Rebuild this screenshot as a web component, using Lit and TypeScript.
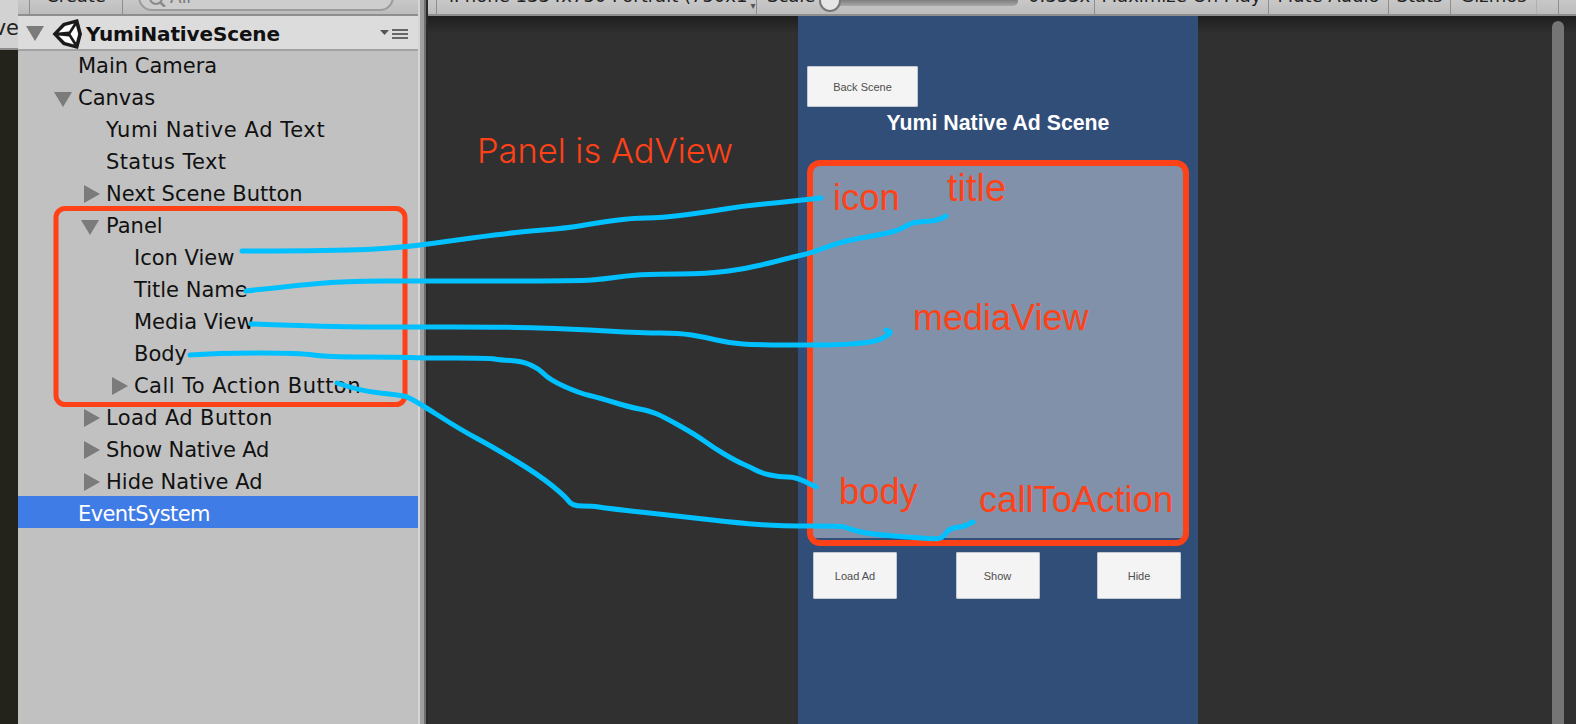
import { LitElement, html, css, svg } from "lit";
import { customElement } from "lit/decorators.js";

interface Row { name: string; depth: number; arrow?: "open" | "closed"; selected?: boolean; ls?: number; }

const ROWS: Row[] = [
  { name: "Main Camera", depth: 0 },
  { name: "Canvas", depth: 0, arrow: "open" },
  { name: "Yumi Native Ad Text", depth: 1, ls: 0.6 },
  { name: "Status Text", depth: 1, ls: 0.4 },
  { name: "Next Scene Button", depth: 1, arrow: "closed" },
  { name: "Panel", depth: 1, arrow: "open" },
  { name: "Icon View", depth: 2 },
  { name: "Title Name", depth: 2 },
  { name: "Media View", depth: 2 },
  { name: "Body", depth: 2 },
  { name: "Call To Action Button", depth: 2, arrow: "closed", ls: 0.45 },
  { name: "Load Ad Button", depth: 1, arrow: "closed", ls: 0.38 },
  { name: "Show Native Ad", depth: 1, arrow: "closed", ls: -0.15 },
  { name: "Hide Native Ad", depth: 1, arrow: "closed" },
  { name: "EventSystem", depth: 0, selected: true, ls: -0.6 },
];

const PAD = [33, 61, 89];

const LINES: number[][] = [
  [242,251, 333,251, 400,248, 471,238, 518,232, 568,228, 596,223, 632,218, 661,218, 707,212, 743,206, 775,203, 793,201, 821,198],
  [246,291, 317,283, 367,281, 400,281, 579,281, 604,279, 625,276, 650,274, 707,274, 750,268, 793,257, 811,253, 843,241, 879,235, 900,230, 912,222, 936,221, 946,216],
  [251,324, 333,327, 400,327, 507,327, 571,329, 643,333, 679,333, 704,337, 729,343, 757,345, 868,345, 893,333, 886,330],
  [190,355, 217,353, 300,353, 327,357, 400,357, 421,358, 489,358, 500,360, 521,361, 538,368, 550,380, 579,393, 600,398, 629,407, 650,411, 664,417, 696,435, 714,448, 736,461, 750,467, 761,473, 779,477, 796,477, 816,487],
  [337,383, 360,391, 400,395, 411,398, 461,430, 493,447, 539,475, 566,497, 572,506, 593,506, 604,508, 686,517, 739,523, 779,526, 843,526, 846,528, 868,534, 920,538, 938,539, 943,537, 950,528, 963,527, 973,522],
];

/** Smooths a hand-drawn polyline by running quadratic curves through the segment midpoints. */
function smooth(p: number[]): string {
  let d = `M${p[0]} ${p[1]}`;
  for (let i = 2; i < p.length - 2; i += 2) {
    const mx = (p[i] + p[i + 2]) / 2;
    const my = (p[i + 1] + p[i + 3]) / 2;
    d += ` Q${p[i]} ${p[i + 1]} ${mx} ${my}`;
  }
  return d + ` L${p[p.length - 2]} ${p[p.length - 1]}`;
}

@customElement("app-root")
export class AppRoot extends LitElement {
  static styles = css`
    :host { display: block; width: 1576px; height: 724px; overflow: hidden; position: relative; font-family: "DejaVu Sans", sans-serif; }
    .page { display: flex; width: 1576px; height: 724px; }

    .edge { width: 18px; flex: none; background: #23231c; display: flex; flex-direction: column; }
    .edge-top { height: 50px; background: #d2d2d2; border-bottom: 2px solid #8c8c8c; box-sizing: border-box; overflow: hidden; display: flex; align-items: center; justify-content: flex-end; font-size: 21px; color: #222; white-space: nowrap; }
    .edge-top span { margin-top: 8px; margin-right: -1px; }

    .hierarchy { width: 400px; flex: none; background: #c1c1c1; display: flex; flex-direction: column; }
    .tb { height: 16px; flex: none; box-sizing: border-box; background: linear-gradient(#c8c8c8, #bcbcbc); border-bottom: 2px solid #8e8e8e; display: flex; overflow: hidden; position: relative; }
    .tb-text { font-size: 18px; line-height: 22px; margin-top: -15px; white-space: nowrap; color: #222; height: 22px; }
    .create { width: 92px; margin-left: 11px; flex: none; border-left: 1.5px solid #8e8e8e; border-right: 1.5px solid #8e8e8e; display: flex; justify-content: center; }
    .search { width: 256px; height: 28px; margin-left: 15px; margin-top: -17px; flex: none; box-sizing: border-box; background: #cdcdcd; border: 2px solid #9c9c9c; border-radius: 14px; display: flex; align-items: flex-end; padding: 0 0 2px 8px; gap: 4px; }
    .search .all { font-size: 17px; line-height: 18px; color: #777; margin-bottom: 1px; }
    .header { height: 35px; flex: none; box-sizing: border-box; background: #dcdcdc; border-bottom: 2px solid #a2a2a2; display: flex; align-items: center; position: relative; z-index: 1; padding: 2px 0 0 8px; }
    .header .tri { margin-right: 8px; }
    .scene { font-weight: 700; font-size: 20px; letter-spacing: -0.13px; margin-left: 4px; color: #111; }
    .menu { margin-left: auto; margin-right: 10px; }
    .list { margin-top: -3px; display: flex; flex-direction: column; }
    .row { height: 32px; flex: none; display: flex; align-items: center; font-size: 21px; color: #111; white-space: nowrap; box-sizing: border-box; padding-top: 4px; }
    .row.selected { background: #3f7ce6; color: #fff; }
    .arrow { width: 27px; flex: none; display: flex; align-items: center; }
    .arrow .open { margin: 2px 0 0 2px; }
    .arrow .closed { margin-left: 5px; }
    .row.lv0 .arrow .open { margin-left: 3px; }

    .divider { width: 10px; flex: none; background: linear-gradient(90deg, #d6d6d6 0 2px, #a0a0a0 2px 6px, #6e6e6e 6px 8px, #2a2a2a 8px 10px); }

    .game { flex: 1; min-width: 0; display: flex; flex-direction: column; background: #303030; }
    .gitem { flex: none; box-sizing: border-box; display: flex; justify-content: center; border-right: 1.5px solid #8e8e8e; }
    .g1 { width: 9px; }
    .g2 { width: 320px; justify-content: flex-start; padding-left: 12px; overflow: hidden; }
    .g3 { width: 338px; justify-content: flex-start; padding-left: 10px; position: relative; }
    .g4 { width: 174px; }
    .g5 { width: 120px; }
    .g6 { width: 62px; }
    .g7 { width: 86px; border-right-color: #b0b0b0; }
    .g8 { width: 22px; }
    .track { position: absolute; left: 72px; top: 0; width: 189px; height: 6px; border-radius: 0 0 5px 5px; background: linear-gradient(#7e7e7e, #a8a8a8); }
    .thumb { position: absolute; left: 62px; top: -10px; width: 18px; height: 18px; border-radius: 50%; background: #e6e6e6; border: 2px solid #777; }
    .zoom { position: absolute; left: 271px; top: 0; }
    .drop { font-size: 10px; color: #555; margin-left: 3px; line-height: 12px; }

    .view { flex: 1; min-height: 0; display: flex; padding-left: 370px; background: linear-gradient(#1e1e1e, #303030 18px); position: relative; }
    .phone { width: 400px; flex: none; background: #314e79; display: flex; flex-direction: column; padding-top: 50px; box-sizing: border-box; }
    .btn { background: #f4f4f4; border-radius: 2px; box-shadow: 0 0 0 1px rgba(190,195,205,.9) inset; display: flex; align-items: center; justify-content: center; font-family: "Liberation Sans", sans-serif; font-size: 11px; color: #4e4e4e; }
    .back { width: 111px; height: 41px; margin-left: 9px; flex: none; }
    .title { height: 32px; flex: none; display: flex; align-items: center; justify-content: center; font-family: "Liberation Sans", sans-serif; font-weight: 700; font-size: 21.3px; color: #fff; }
    .panel { height: 374px; margin: 25px 12px 0 12px; flex: none; background: #8191aa; }
    .actions { display: flex; justify-content: space-between; margin: 14px 17px 0 15px; }
    .actions .btn { width: 84px; height: 47px; }
    .actions .btn:nth-child(2) { margin-left: 1px; }
    .scroll { position: absolute; left: 1124px; top: 5px; bottom: 0; width: 12px; border-radius: 6px 6px 0 0; background: #757575; }

    .overlay { position: absolute; left: 0; top: 0; width: 1576px; height: 724px; pointer-events: none; }
    .label { position: absolute; color: #ff4118; font-family: "Liberation Sans", sans-serif; font-size: 36.4px; line-height: 40px; white-space: nowrap; }
    .l-adview { left: 477px; top: 131px; font-family: Inter, sans-serif; font-size: 34.4px; font-weight: 300; }
    .l-icon { left: 833px; top: 178px; }
    .l-title { left: 947px; top: 168px; font-size: 38px; }
    .l-media { left: 913px; top: 298px; font-size: 36px; }
    .l-body { left: 839px; top: 472px; }
    .l-cta { left: 979px; top: 480px; }
  `;

  private tri(kind: "open" | "closed") {
    return kind === "open"
      ? html`<svg class="open tri" width="18" height="15" viewBox="0 0 18 15"><polygon points="0,0 18,0 9,15" fill="#7b7b7b"/></svg>`
      : html`<svg class="closed tri" width="16" height="18" viewBox="0 0 16 18"><polygon points="0,0 16,9 0,18" fill="#7b7b7b"/></svg>`;
  }

  private logo() {
    return html`<svg width="30" height="30" viewBox="0 0 30 30">
      <polygon points="0.5,15 11,4 26,0 30,15 26,30 11,26" fill="#1a1a1a"/>
      <polygon points="6.5,13.5 13,7 22,4.5 17,12.5" fill="#fff"/>
      <polygon points="6.5,16.5 17,17.5 22,25.5 13,23" fill="#fff"/>
      <polygon points="18.5,15 24,6.5 26.2,15 24,23.5" fill="#fff"/>
    </svg>`;
  }

  private overlay() {
    return svg`<svg class="overlay" width="1576" height="724" viewBox="0 0 1576 724" fill="none">
      <rect x="56" y="208.5" width="349" height="196" rx="9" stroke="#ff4118" stroke-width="5"/>
      <rect x="810" y="163" width="376" height="380" rx="10" stroke="#ff4118" stroke-width="6"/>
      ${LINES.map((p) => svg`<path d=${smooth(p)} stroke="#00c0ff" stroke-width="5" stroke-linecap="round" stroke-linejoin="round"/>`)}
    </svg>`;
  }

  render() {
    return html`
      <div class="page">
        <div class="edge"><div class="edge-top"><span>ve</span></div></div>
        <div class="hierarchy">
          <div class="tb">
            <div class="create"><span class="tb-text">Create</span></div>
            <div class="search">
              <svg width="18" height="8" viewBox="0 0 18 8" fill="none"><circle cx="8" cy="-1" r="6" stroke="#8a8a8a" stroke-width="2"/><path d="M12 3 L17 8" stroke="#8a8a8a" stroke-width="2.5"/></svg>
              <span class="all">All</span>
            </div>
          </div>
          <div class="header">
            ${this.tri("open")}
            ${this.logo()}
            <span class="scene">YumiNativeScene</span>
            <svg class="menu" width="28" height="10" viewBox="0 0 28 10"><polygon points="0,1 9,1 4.5,6" fill="#555"/><path d="M12 1H28M12 5H28M12 9H28" stroke="#666" stroke-width="2"/></svg>
          </div>
          <div class="list">
            ${ROWS.map((r) => html`
              <div class="row lv${r.depth} ${r.selected ? "selected" : ""}" style="padding-left:${PAD[r.depth]}px">
                <span class="arrow">${r.arrow ? this.tri(r.arrow) : ""}</span>
                <span style="letter-spacing:${r.ls ?? 0}px">${r.name}</span>
              </div>`)}
          </div>
        </div>
        <div class="divider"></div>
        <div class="game">
          <div class="tb">
            <div class="gitem g1"></div>
            <div class="gitem g2"><span class="tb-text">iPhone 1334x750 Portrait (750x1</span><span class="drop">▾</span></div>
            <div class="gitem g3">
              <span class="tb-text">Scale</span>
              <span class="track"></span><span class="thumb"></span>
              <span class="tb-text zoom">0.333x</span>
            </div>
            <div class="gitem g4"><span class="tb-text">Maximize On Play</span></div>
            <div class="gitem g5"><span class="tb-text">Mute Audio</span></div>
            <div class="gitem g6"><span class="tb-text">Stats</span></div>
            <div class="gitem g7"><span class="tb-text">Gizmos</span></div>
            <div class="gitem g8"></div>
          </div>
          <div class="view">
            <div class="phone">
              <div class="btn back">Back Scene</div>
              <div class="title">Yumi Native Ad Scene</div>
              <div class="panel"></div>
              <div class="actions">
                <div class="btn">Load Ad</div>
                <div class="btn">Show</div>
                <div class="btn">Hide</div>
              </div>
            </div>
            <div class="scroll"></div>
          </div>
        </div>
      </div>
      ${this.overlay()}
      <span class="label l-adview">Panel is AdView</span>
      <span class="label l-icon">icon</span>
      <span class="label l-title">title</span>
      <span class="label l-media">mediaView</span>
      <span class="label l-body">body</span>
      <span class="label l-cta">callToAction</span>
    `;
  }
}
